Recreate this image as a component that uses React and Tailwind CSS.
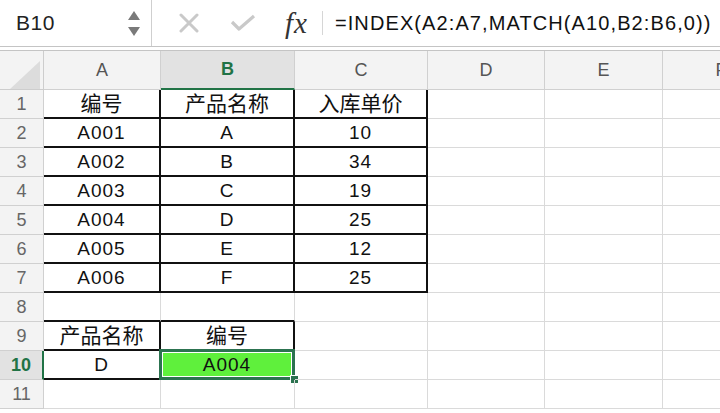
import React from "react";

const COLS = ["A", "B", "C", "D", "E", "F"];

// cell values, keyed by row number
const DATA = {
  1: ["编号", "产品名称", "入库单价"],
  2: ["A001", "A", "10"],
  3: ["A002", "B", "34"],
  4: ["A003", "C", "19"],
  5: ["A004", "D", "25"],
  6: ["A005", "E", "12"],
  7: ["A006", "F", "25"],
  9: ["产品名称", "编号"],
  10: ["D", "A004"],
};

const isCjk = (t) => /[\u4e00-\u9fff]/.test(t);

// black borders of the two little tables
function boxed(row, col) {
  if (row >= 1 && row <= 7 && col <= 2) return true;
  if ((row === 9 || row === 10) && col <= 1) return true;
  return false;
}

function Cell({ row, col }) {
  const text = DATA[row]?.[col] ?? "";
  const inTable = boxed(row, col);
  const aboveTable = row === 8 && col <= 1;
  const selected = row === 10 && col === 1;

  let cls = "relative flex items-center justify-center border-r border-b border-[#dadada]";
  if (inTable) cls = "relative flex items-center justify-center border-r-2 border-b-2 border-[#111]";
  else if (aboveTable) cls = "relative flex items-center justify-center border-r border-r-[#dadada] border-b-2 border-b-[#111]";

  return (
    <div className={cls}>
      {selected && (
        <div className="absolute -left-[2px] -top-[2px] -right-[2px] -bottom-[2px] border-[3px] border-[#2c7350] bg-[#5ff03c] shadow-[inset_0_0_0_1px_#ffffff]">
          <div className="absolute -right-[7px] -bottom-[7px] w-[9px] h-[9px] bg-[#2c7350] border border-white" />
        </div>
      )}
      <span
        className={
          isCjk(text)
            ? "relative text-[21px] text-[#111] leading-none"
            : "relative text-[19px] tracking-[1px] text-[#111] leading-none"
        }
      >
        {text}
      </span>
    </div>
  );
}

function FormulaBar() {
  return (
    <div className="flex h-[46px] bg-white">
      <div className="w-[152px] flex items-center border-r border-[#cfcfcf] pl-[16px] pr-[11px]">
        <span className="flex-1 text-[21px] tracking-[0.5px] text-[#222]">B10</span>
        <div className="flex flex-col gap-[7px]">
          <svg width="12" height="9" viewBox="0 0 12 9">
            <path d="M6 0 L12 9 L0 9 Z" fill="#7a7a7a" />
          </svg>
          <svg width="12" height="9" viewBox="0 0 12 9">
            <path d="M0 0 L12 0 L6 9 Z" fill="#7a7a7a" />
          </svg>
        </div>
      </div>
      <div className="flex items-center pl-[27px]">
        <svg width="20" height="20" viewBox="0 0 20 20">
          <path d="M2 2 L18 18 M18 2 L2 18" stroke="#c9c9c9" strokeWidth="3" strokeLinecap="round" />
        </svg>
        <svg className="ml-[31px]" width="26" height="20" viewBox="0 0 26 20">
          <path d="M2 9 L9 16 L24 3" stroke="#c9c9c9" strokeWidth="3.2" fill="none" strokeLinejoin="round" />
        </svg>
        <span className="ml-[29px] text-[29px] leading-none italic text-[#333] font-['Liberation_Serif',serif] tracking-[1px]">fx</span>
        <div className="ml-[14px] w-px h-[24px] bg-[#d6d6d6]" />
        <span className="ml-[12px] text-[20px] tracking-[1.1px] text-[#111] whitespace-nowrap">
          =INDEX(A2:A7,MATCH(A10,B2:B6,0))
        </span>
      </div>
    </div>
  );
}

export default function App() {
  const rows = [1, 2, 3, 4, 5, 6, 7, 8, 9, 10, 11];
  return (
    <div className="w-[720px] h-[413px] overflow-hidden bg-white font-['Liberation_Sans','Noto_Sans_CJK_SC',sans-serif]">
      <FormulaBar />
      <div className="h-[5px] border-t border-b border-[#c4c4c4] bg-white" />

      <div className="grid w-max grid-cols-[44px_117px_134px_133px_117px_118px_117px] grid-rows-[39px_repeat(11,29px)]">
        {/* corner */}
        <div className="relative bg-[#f3f3f3] border-r border-b border-[#cdcdcd]">
          <svg className="absolute left-[10px] top-[10px]" width="30" height="28" viewBox="0 0 30 28">
            <path d="M30 0 L30 28 L0 28 Z" fill="#dcdcdc" />
          </svg>
        </div>
        {COLS.map((c) =>
          c === "B" ? (
            <div key={c} className="flex items-center justify-center bg-[#e2e2e2] border-r border-[#d0d0d0] border-b-2 border-b-[#217346] text-[18px] font-bold text-[#217346]">
              {c}
            </div>
          ) : (
            <div key={c} className="flex items-center justify-center bg-[#f3f3f3] border-r border-b border-[#d0d0d0] text-[18px] text-[#555]">
              {c}
            </div>
          )
        )}

        {rows.map((r) => (
          <React.Fragment key={r}>
            {r === 10 ? (
              <div className="flex items-center justify-center bg-[#e2e2e2] border-r-2 border-r-[#217346] border-b border-b-[#d0d0d0] text-[18px] font-bold text-[#217346]">
                {r}
              </div>
            ) : (
              <div className="flex items-center justify-center bg-[#f3f3f3] border-r border-b border-[#d0d0d0] text-[18px] text-[#666]">
                {r}
              </div>
            )}
            {COLS.map((c, ci) => (
              <Cell key={c} row={r} col={ci} />
            ))}
          </React.Fragment>
        ))}
      </div>
    </div>
  );
}
